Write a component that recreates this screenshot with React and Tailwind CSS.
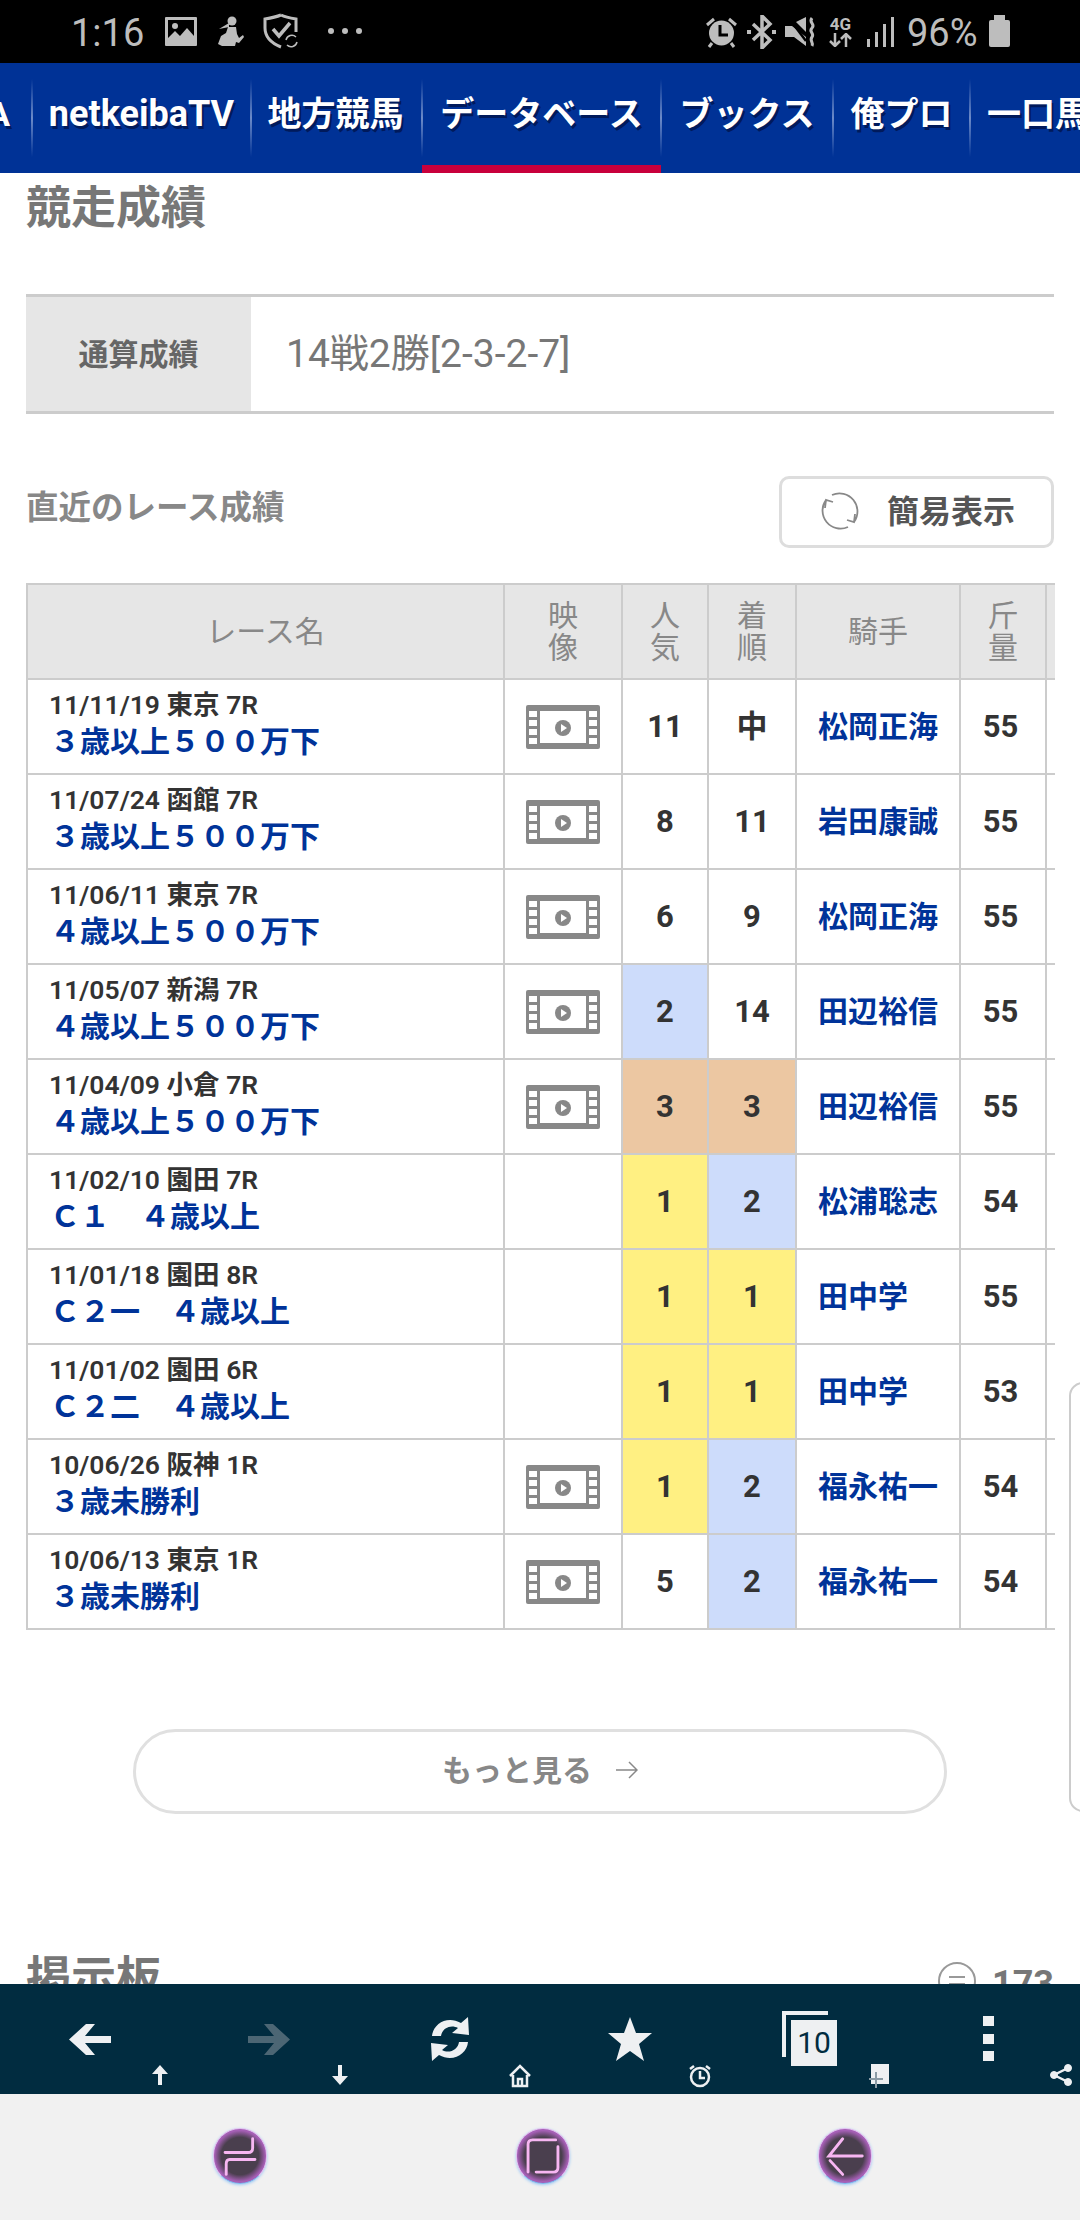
const font = { fontFamily: 'Roboto,"Noto Sans CJK JP",sans-serif' };

const races = [
  { date: "11/11/19 東京 7R", name: "３歳以上５００万下", video: true, pop: "11", rank: "中", jockey: "松岡正海", kg: "55" },
  { date: "11/07/24 函館 7R", name: "３歳以上５００万下", video: true, pop: "8", rank: "11", jockey: "岩田康誠", kg: "55" },
  { date: "11/06/11 東京 7R", name: "４歳以上５００万下", video: true, pop: "6", rank: "9", jockey: "松岡正海", kg: "55" },
  { date: "11/05/07 新潟 7R", name: "４歳以上５００万下", video: true, pop: "2", popBg: "bg-[#cddcfb]", rank: "14", jockey: "田辺裕信", kg: "55" },
  { date: "11/04/09 小倉 7R", name: "４歳以上５００万下", video: true, pop: "3", popBg: "bg-[#ecc7a2]", rank: "3", rankBg: "bg-[#ecc7a2]", jockey: "田辺裕信", kg: "55" },
  { date: "11/02/10 園田 7R", name: "Ｃ１　４歳以上", pop: "1", popBg: "bg-[#fff082]", rank: "2", rankBg: "bg-[#cddcfb]", jockey: "松浦聡志", kg: "54" },
  { date: "11/01/18 園田 8R", name: "Ｃ２一　４歳以上", pop: "1", popBg: "bg-[#fff082]", rank: "1", rankBg: "bg-[#fff082]", jockey: "田中学", kg: "55" },
  { date: "11/01/02 園田 6R", name: "Ｃ２二　４歳以上", pop: "1", popBg: "bg-[#fff082]", rank: "1", rankBg: "bg-[#fff082]", jockey: "田中学", kg: "53" },
  { date: "10/06/26 阪神 1R", name: "３歳未勝利", video: true, pop: "1", popBg: "bg-[#fff082]", rank: "2", rankBg: "bg-[#cddcfb]", jockey: "福永祐一", kg: "54" },
  { date: "10/06/13 東京 1R", name: "３歳未勝利", video: true, pop: "5", rank: "2", rankBg: "bg-[#cddcfb]", jockey: "福永祐一", kg: "54" },
];

const navItems = [
  { label: "netkeibaTV", w: "w-[217px] text-[36px]" },
  { label: "地方競馬", w: "w-[169px] pr-[2px]" },
  { label: "データベース", w: "w-[237px]", active: true },
  { label: "ブックス", w: "w-[170px]" },
  { label: "俺プロ", w: "w-[135px]" },
];

function Sep() {
  return <div className="w-[2px] h-[78px] mt-[16px] shrink-0 bg-gradient-to-b from-transparent via-[#6d8bc8] to-transparent" />;
}

function FilmIcon() {
  return (
    <svg width="74" height="44" viewBox="0 0 74 44" className="mx-auto block">
      <rect width="74" height="44" rx="2" fill="#888" />
      <rect x="14" y="6" width="46" height="32" fill="#fff" />
      {[6, 15, 24, 33].map((y) => (
        <g key={y}>
          <rect x="3" y={y} width="8" height="6" fill="#fff" />
          <rect x="63" y={y} width="8" height="6" fill="#fff" />
        </g>
      ))}
      <circle cx="37" cy="23" r="8" fill="#888" />
      <path d="M35 19l6 4-6 4z" fill="#fff" />
    </svg>
  );
}

function StatusBar() {
  const c = "#bdbdbd";
  return (
    <div className="relative h-[63px] bg-black text-[#bdbdbd] shrink-0">
      <span className="absolute left-[71px] top-[11px] text-[38px] leading-[44px]">1:16</span>
      <svg className="absolute left-[165px] top-[17px]" width="32" height="29" viewBox="0 0 32 29">
        <rect width="32" height="29" rx="1" fill={c} />
        <rect x="3" y="3" width="26" height="23" fill="#000" />
        <path d="M3 26v-5l7-7 5 5 7-8 7 8v7z" fill={c} />
        <circle cx="10" cy="9" r="3" fill={c} />
      </svg>
      <svg className="absolute left-[218px] top-[16px]" width="26" height="32" viewBox="0 0 26 32" fill={c}>
        <circle cx="14" cy="5" r="4.500" />
        <path d="M11 7L1 13l10-2z" />
        <path d="M10 11h8l1 7 2 4 4-3 1 2-5 6-3-1-1 4H4l-4-2 3-8 5-3z" />
      </svg>
      <svg className="absolute left-[263px] top-[13px]" width="37" height="36" viewBox="0 0 37 36" fill="none" stroke={c} strokeWidth="3">
        <path d="M18 2c4 2 9 3 15 4v13M18 34C8 30 2 23 2 15V6c6-1 11-2 16-4" />
        <path d="M10 16l6 7 11-13" strokeWidth="3.500" />
        <path d="M23 27a6 6 0 0 1 10-3M34 29a6 6 0 0 1-10 3" strokeWidth="1.500" />
      </svg>
      <div className="absolute left-[328px] top-[28px] flex gap-[8px]">
        <div className="w-[6px] h-[6px] rounded-full bg-[#bdbdbd]" />
        <div className="w-[6px] h-[6px] rounded-full bg-[#bdbdbd]" />
        <div className="w-[6px] h-[6px] rounded-full bg-[#bdbdbd]" />
      </div>
      <svg className="absolute left-[705px] top-[16px]" width="33" height="32" viewBox="0 0 33 32">
        <circle cx="16.500" cy="17" r="12.500" fill={c} />
        <path d="M15 9v10h8" fill="none" stroke="#000" strokeWidth="3" />
        <path d="M2 9l7-6M31 9l-7-6M7 27l-3 4M26 27l3 4" stroke={c} strokeWidth="3" />
      </svg>
      <svg className="absolute left-[747px] top-[15px]" width="29" height="34" viewBox="0 0 29 34" fill="none" stroke={c} strokeWidth="3.500">
        <path d="M6 9l17 16-8 8V1l8 8L6 25" />
        <path d="M0 17h4M25 17h4" strokeWidth="4" />
      </svg>
      <svg className="absolute left-[785px] top-[16px]" width="32" height="32" viewBox="0 0 32 32" fill={c}>
        <path d="M0 10h7l14 11v9L9 21H0z" />
        <path d="M11 6l10-5v15z" />
        <path d="M3 1l18 24" stroke="#000" strokeWidth="2.500" />
        <path d="M27 2c-4 5 4 6 0 10s3 5 0 9 2 5 0 9" fill="none" stroke={c} strokeWidth="3" />
      </svg>
      <div className="absolute left-[829px] top-[17px] w-[23px] text-center text-[17px] leading-[14px] font-bold">4G</div>
      <svg className="absolute left-[829px] top-[33px]" width="23" height="14" viewBox="0 0 23 14" fill="none" stroke={c} strokeWidth="2.500">
        <path d="M6 0v13M1 8l5 5 5-5M17 14V1M12 6l5-5 5 5" />
      </svg>
      <svg className="absolute left-[867px] top-[17px]" width="27" height="30" viewBox="0 0 27 30" fill={c}>
        <rect x="0" y="22" width="3" height="8" />
        <rect x="8" y="15" width="3" height="15" />
        <rect x="16" y="7" width="3" height="23" />
        <rect x="24" y="0" width="3" height="30" />
      </svg>
      <span className="absolute left-[907px] top-[11px] text-[38px] leading-[44px]">96%</span>
      <div className="absolute left-[989px] top-[20px] w-[21px] h-[27px] rounded-[2px] bg-[#bdbdbd]" />
      <div className="absolute left-[994px] top-[15px] w-[11px] h-[5px] bg-[#bdbdbd]" />
    </div>
  );
}

function TopNav() {
  return (
    <nav className="flex h-[110px] bg-[#003296] shrink-0 overflow-hidden text-white font-bold text-[34px] leading-[102px] [text-shadow:2px_3px_0_#001a5c]">
      <div className="w-[31px] shrink-0 flex justify-end pr-[21px]">A</div>
      <Sep />
      {navItems.map((item) => (
        <div key={item.label} className="contents">
          <div className={`${item.w} shrink-0 h-full text-center whitespace-nowrap relative`}>
            {item.label}
            {item.active && <div className="absolute -left-[1px] -right-[1px] bottom-0 h-[8px] bg-[#c8003c]" />}
          </div>
          <Sep />
        </div>
      ))}
      <div className="pl-[16px] whitespace-nowrap">一口馬主</div>
    </nav>
  );
}

function RaceTable() {
  return (
    <div className="overflow-hidden mt-[35px] w-[1029px]">
      <table className="border-collapse table-fixed w-[1129px]">
        <colgroup>
          <col className="w-[477px]" />
          <col className="w-[118px]" />
          <col className="w-[86px]" />
          <col className="w-[88px]" />
          <col className="w-[164px]" />
          <col className="w-[86px]" />
          <col className="w-[110px]" />
        </colgroup>
        <thead>
          <tr className="h-[95px] bg-[#e6e6e6] text-[#888] text-[30px] leading-[32px] font-normal">
            <th className="border-2 border-[#ccc] font-normal">レース名</th>
            <th className="border-2 border-[#ccc] font-normal">映<br />像</th>
            <th className="border-2 border-[#ccc] font-normal">人<br />気</th>
            <th className="border-2 border-[#ccc] font-normal">着<br />順</th>
            <th className="border-2 border-[#ccc] font-normal">騎手</th>
            <th className="border-2 border-[#ccc] font-normal">斤<br />量</th>
            <th className="border-2 border-[#ccc] font-normal"></th>
          </tr>
        </thead>
        <tbody>
          {races.map((r) => (
            <tr key={r.date} className="h-[95px] text-center font-bold text-[31px] text-[#333]">
              <td className="border-2 border-[#ccc] pl-[22px] text-left">
                <div className="text-[26.5px] leading-[30px] font-semibold -mt-[4px] -ml-[1px]">{r.date}</div>
                <div className="text-[30px] leading-[36px] mt-[4px] text-[#003399] whitespace-nowrap font-bold">{r.name}</div>
              </td>
              <td className="border-2 border-[#ccc]">{r.video && <FilmIcon />}</td>
              <td className={`border-2 border-[#ccc] pt-[2px] ${r.popBg || ""}`}>{r.pop}</td>
              <td className={`border-2 border-[#ccc] pt-[2px] ${r.rankBg || ""}`}>{r.rank}</td>
              <td className="border-2 border-[#ccc] text-left pl-[21px] text-[#003399] text-[30px]">{r.jockey}</td>
              <td className="border-2 border-[#ccc] pr-[5px] pt-[2px]">{r.kg}</td>
              <td className="border-2 border-[#ccc]"></td>
            </tr>
          ))}
        </tbody>
      </table>
    </div>
  );
}

function Toolbar() {
  const light = "#eef0f2";
  return (
    <div className="grid grid-cols-6 h-[110px] bg-[#012c40] shrink-0 overflow-hidden">
      <div className="relative">
        <svg className="absolute left-[69px] top-[40px]" width="42" height="31" viewBox="0 0 42 31" fill={light}>
          <path d="M17 0h9L16 12h26v7H16l10 12h-9L0 15.500z" />
        </svg>
        <svg className="absolute left-[148px] top-[81px]" width="24" height="20" viewBox="0 0 24 20" fill={light}>
          <path d="M12 0l8 9h-6v11h-4V9H4z" />
        </svg>
      </div>
      <div className="relative">
        <svg className="absolute left-[68px] top-[40px]" width="42" height="31" viewBox="0 0 42 31" fill="#4c6674">
          <path d="M25 0h-9l10 12H0v7h26L16 31h9l17-15.500z" />
        </svg>
        <svg className="absolute left-[148px] top-[81px]" width="24" height="20" viewBox="0 0 24 20" fill={light}>
          <path d="M10 0h4v11h6l-8 9-8-9h6z" />
        </svg>
      </div>
      <div className="relative">
        <svg className="absolute left-[70px] top-[33px]" width="40" height="44" viewBox="0 0 40 44" fill={light}>
          <path d="M38 0l1 18-17-2 6-5c-7-4-16 0-17 8H2C3 7 17-2 31 6zM2 44l-1-18 17 2-6 5c7 4 16 0 17-8h9c-1 12-15 21-29 13z" />
        </svg>
        <svg className="absolute left-[149px] top-[80px]" width="22" height="24" viewBox="0 0 22 24" fill="none" stroke={light} strokeWidth="2.500">
          <path d="M1 12L11 2l10 10M4 11v11h14V11M9 22v-7h4v7" />
        </svg>
      </div>
      <div className="relative">
        <svg className="absolute left-[68px] top-[33px]" width="44" height="44" viewBox="0 0 44 44" fill={light}>
          <path d="M22 0l6 16h16l-13 11 5 17-14-10-14 10 5-17L0 16h16z" />
        </svg>
        <svg className="absolute left-[148px] top-[80px]" width="24" height="24" viewBox="0 0 24 24" fill="none" stroke={light} strokeWidth="2.500">
          <circle cx="12" cy="13" r="9" />
          <path d="M12 7v7h5M2 5l4-3M22 5l-4-3" />
        </svg>
      </div>
      <div className="relative">
        <div className="absolute left-[62px] top-[27px] w-[46px] h-[46px] bg-[#eef0f2]" />
        <div className="absolute left-[66px] top-[31px] w-[50px] h-[50px] bg-[#012c40]" />
        <div className="absolute left-[71px] top-[36px] w-[46px] h-[46px] bg-[#eef0f2] text-center text-[#012c40] text-[30px] leading-[46px]">10</div>
        <div className="absolute left-[151px] top-[80px] w-[18px] h-[20px] bg-[#eef0f2]" />
        <svg className="absolute left-[149px] top-[88px]" width="14" height="16" viewBox="0 0 14 16" fill="none" stroke="#8b9ba5" strokeWidth="2">
          <path d="M7 0v16M0 7h14" />
        </svg>
      </div>
      <div className="relative">
        <div className="absolute left-[83px] top-[32px] w-[11px] h-[10px] bg-[#eef0f2]" />
        <div className="absolute left-[83px] top-[50px] w-[11px] h-[10px] bg-[#eef0f2]" />
        <div className="absolute left-[83px] top-[67px] w-[11px] h-[10px] bg-[#eef0f2]" />
        <svg className="absolute left-[150px] top-[80px]" width="22" height="22" viewBox="0 0 22 22" fill={light} stroke={light}>
          <circle cx="18" cy="4" r="3.500" />
          <circle cx="18" cy="18" r="3.500" />
          <circle cx="4" cy="11" r="3.500" />
          <path d="M18 4L4 11l14 7" fill="none" strokeWidth="2.500" />
        </svg>
      </div>
    </div>
  );
}

function GlowButton({ children }) {
  return (
    <div className="w-[54px] h-[56px] rounded-full bg-[radial-gradient(circle,#4a3f4e_50%,#a55fb5_68%)] border-[1px] border-[#e0c0f0] border-b-[#7ab8f0] shadow-[0_1px_3px_#9ac8f5] flex items-center justify-center">
      <svg width="46" height="46" viewBox="0 0 40 40" fill="none" stroke="#f7b6f2" strokeWidth="2.500" strokeLinecap="round">
        {children}
      </svg>
    </div>
  );
}

export default function App() {
  return (
    <div className="relative h-[2220px] w-[1080px] flex flex-col overflow-hidden bg-white" style={font}>
      <StatusBar />
      <TopNav />

      <main className="flex-1 overflow-hidden px-[26px] pt-[13px]">
        <h2 className="text-[45px] leading-[46px] font-bold text-[#777]">競走成績</h2>

        <div className="flex mt-[62px] h-[120px] border-y-[3px] border-[#ccc]">
          <div className="w-[225px] bg-[#e6e6e6] flex items-center justify-center text-[30px] font-bold text-[#666]">通算成績</div>
          <div className="pl-[35px] flex items-center text-[39px] text-[#777]">14戦2勝[2-3-2-7]</div>
        </div>

        <div className="flex justify-between items-center mt-[62px] h-[72px]">
          <div className="text-[32.5px] font-bold text-[#888] -mt-[7px]">直近のレース成績</div>
          <div className="w-[275px] h-[72px] border-[3px] border-[#ddd] rounded-[10px] flex items-center justify-center gap-[25px]">
            <svg width="44" height="42" viewBox="0 0 44 42" fill="none" stroke="#888" strokeWidth="1.800">
              <path d="M14 4A18 18 0 0 1 36 31M29 29l7 2 1-8M30 36A18 18 0 0 1 8 9M15 11L8 9l-1 8" />
            </svg>
            <span className="text-[32px] font-bold text-[#555]">簡易表示</span>
          </div>
        </div>

        <RaceTable />

        <div className="mx-auto mt-[99px] w-[814px] h-[85px] rounded-full border-[3px] border-[#e0e0e0] flex items-center justify-center gap-[24px] text-[30px] font-bold text-[#888] pb-[3px]">
          もっと見る
          <svg width="22" height="22" viewBox="0 0 22 22" fill="none" stroke="#888" strokeWidth="1.500">
            <path d="M0 11h21M13 3l8 8-8 8" />
          </svg>
        </div>

        <div className="flex justify-between mt-[142px]">
          <h2 className="text-[45px] leading-[46px] font-bold text-[#777]">掲示板</h2>
          <div className="flex items-start gap-[16px] pt-[6px]">
            <svg width="38" height="38" viewBox="0 0 38 38" fill="none" stroke="#999" strokeWidth="2">
              <circle cx="19" cy="19" r="18" />
              <path d="M11 15h16M11 22h16" />
            </svg>
            <span className="text-[36px] leading-[38px] font-bold text-[#777] mt-[3px]">173</span>
          </div>
        </div>
      </main>

      <Toolbar />

      <div className="h-[126px] bg-[#f1f1f1] shrink-0 relative">
        <div className="absolute left-[213px] top-[34px]">
          <GlowButton>
            <path d="M31 5v8q0 4-4 4H7M33 23H11q-3 0-3 4v9" />
          </GlowButton>
        </div>
        <div className="absolute left-[516px] top-[34px]">
          <GlowButton>
            <path d="M31 6H11q-4 0-4 4v24M33 12v18q0 4-4 4H14" />
          </GlowButton>
        </div>
        <div className="absolute left-[818px] top-[34px]">
          <GlowButton>
            <path d="M35 20H6L18 5M7 24l11 12" />
          </GlowButton>
        </div>
      </div>

      <div className="absolute left-[1069px] top-[1382px] w-[20px] h-[430px] bg-white border-2 border-[#ccc] rounded-l-[14px]" />
    </div>
  );
}
